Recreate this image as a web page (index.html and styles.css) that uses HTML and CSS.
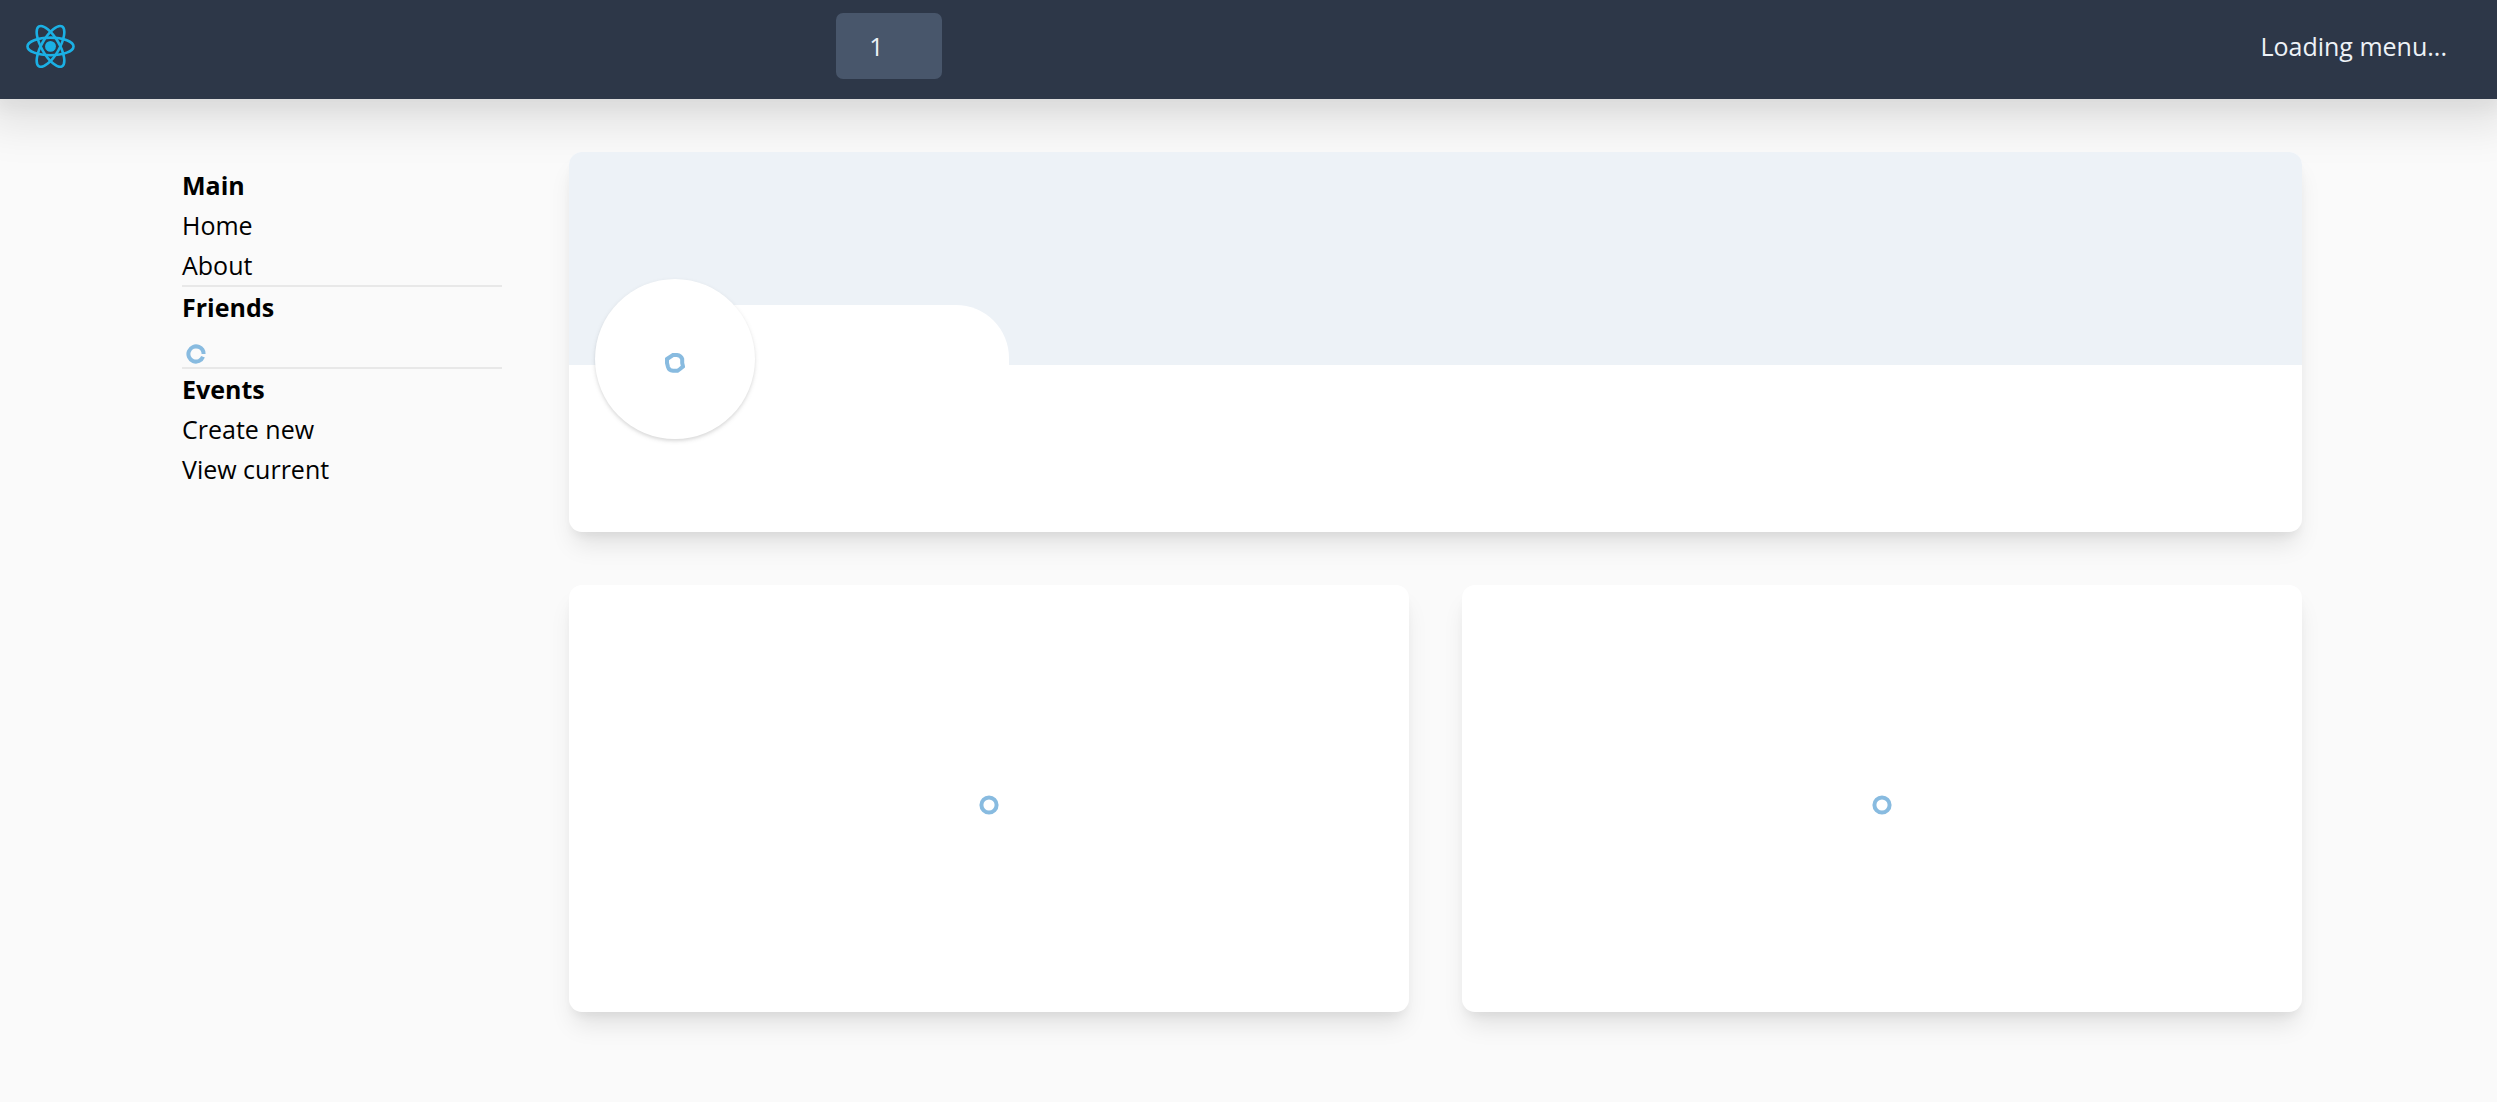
FILE: index.html
```html
<!DOCTYPE html>
<html lang="en">
<head>
  <meta charset="UTF-8">
  <meta name="viewport" content="width=device-width, initial-scale=1.0">
  <title>Profile</title>
  <link rel="stylesheet" href="styles.css">
</head>
<body>
  <header class="navbar">
    <a class="logo" href="#" aria-label="Home">
      <svg viewBox="-11.7 -10.7 23.4 21.4" fill="none" stroke="#1bb0e4" stroke-width="1.25">
        <circle r="2.6" fill="#1bb0e4" stroke="none"/>
        <ellipse rx="11" ry="4.2"/>
        <ellipse rx="11" ry="4.2" transform="rotate(60)"/>
        <ellipse rx="11" ry="4.2" transform="rotate(120)"/>
      </svg>
    </a>
    <div class="nav-center">
      <button class="counter" type="button">1</button>
    </div>
    <div class="nav-menu">Loading menu...</div>
  </header>

  <div class="container">
    <nav class="sidebar">
      <section class="group">
        <h2>Main</h2>
        <a href="#">Home</a>
        <a href="#">About</a>
      </section>
      <section class="group">
        <h2>Friends</h2>
        <div class="friends-loading">
          <svg class="spinner" viewBox="0 0 20 20"><circle cx="10" cy="10" r="7.6" pathLength="100" stroke-dasharray="94 6" transform="rotate(22 10 10)"/></svg>
        </div>
      </section>
      <section class="group">
        <h2>Events</h2>
        <a href="#">Create new</a>
        <a href="#">View current</a>
      </section>
    </nav>

    <main class="content">
      <section class="card profile">
        <div class="cover">
          <div class="name-tab"></div>
        </div>
        <div class="avatar">
          <svg class="spinner" viewBox="0 0 20 20"><path d="M2 6 L8 2 H12 Q16 2.5 17.2 6 V10 L18 13.5 L15 16 L12.5 17.8 H8 Q4 17.5 3 14 L2 10 Z"/></svg>
        </div>
      </section>
      <div class="panels">
        <section class="card panel">
          <svg class="spinner" viewBox="0 0 20 20"><circle cx="10" cy="10" r="7.6"/></svg>
        </section>
        <section class="card panel">
          <svg class="spinner" viewBox="0 0 20 20"><circle cx="10" cy="10" r="7.6"/></svg>
        </section>
      </div>
    </main>
  </div>
</body>
</html>
```

FILE: styles.css
```css
* {
  box-sizing: border-box;
}
body {
  margin: 0;
  background-color: #fafafa;
  color: #000;
  font-family: "Segoe UI", "Open Sans", "Noto Sans", sans-serif;
  font-size: 25px;
  line-height: 40px;
}
a {
  color: inherit;
  text-decoration: none;
}

/* navbar */
.navbar {
  display: grid;
  grid-template-columns: repeat(3, 1fr);
  align-items: center;
  padding: 13px 0 20px;
  background-color: #2d3748;
  color: #edf2f7;
  box-shadow: 0 10px 42px 15px rgba(0, 0, 0, 0.1), 0 5px 17px 5px rgba(0, 0, 0, 0.04);
}
.logo {
  padding-left: 26px;
}
.logo svg {
  display: block;
  width: 49px;
}
.nav-center {
  display: flex;
  padding-left: 4px;
}
.counter {
  min-width: 106px;
  padding: 13px 33px;
  border: none;
  border-radius: 7px;
  background-color: #48566b;
  color: inherit;
  font: inherit;
  text-align: left;
  cursor: pointer;
}
.nav-menu {
  padding-right: 50px;
  text-align: right;
}

/* page */
.container {
  display: flex;
  gap: 67px;
  max-width: 2133px;
  margin: 0 auto;
  padding: 53px 0;
}
.sidebar {
  flex: 0 0 15%;
  padding-top: 13px;
}
.group {
  border-bottom: 2px solid #e8e8e8;
}
.group:last-child {
  border-bottom: none;
}
.group h2 {
  margin: 0;
  font-size: inherit;
  font-weight: 700;
}
.group a {
  display: block;
}
.friends-loading {
  display: flex;
  align-items: flex-end;
  height: 40px;
  padding: 0 4px 3px;
}
.content {
  flex: 1;
  padding-right: 13px;
}
.card {
  border-radius: 13px;
  background-color: #fff;
  box-shadow: 0 17px 25px -5px rgba(0, 0, 0, 0.1), 0 7px 10px -3px rgba(0, 0, 0, 0.05);
}

/* profile */
.profile {
  margin-bottom: 53px;
  padding-bottom: 93px;
}
.cover {
  display: flex;
  align-items: flex-end;
  height: 213px;
  padding-left: 107px;
  border-radius: 13px 13px 0 0;
  background-color: #edf2f7;
}
.name-tab {
  width: 333px;
  height: 60px;
  border-top-right-radius: 53px;
  background-color: #fff;
}
.avatar {
  position: relative;
  display: flex;
  align-items: center;
  justify-content: center;
  width: 160px;
  height: 160px;
  margin: -86px 0 0 26px;
  padding-top: 7px;
  border-radius: 50%;
  background-color: #fff;
  box-shadow: 0 2px 5px rgba(0, 0, 0, 0.1), 0 2px 3px rgba(0, 0, 0, 0.06);
}

/* panels */
.panels {
  display: grid;
  grid-template-columns: 1fr 1fr;
  gap: 53px;
}
.panel {
  display: flex;
  align-items: center;
  justify-content: center;
  height: 427px;
  padding-top: 13px;
}
.spinner {
  width: 20px;
  height: 20px;
  fill: none;
  stroke: #88bbe0;
  stroke-width: 4px;
}
```
